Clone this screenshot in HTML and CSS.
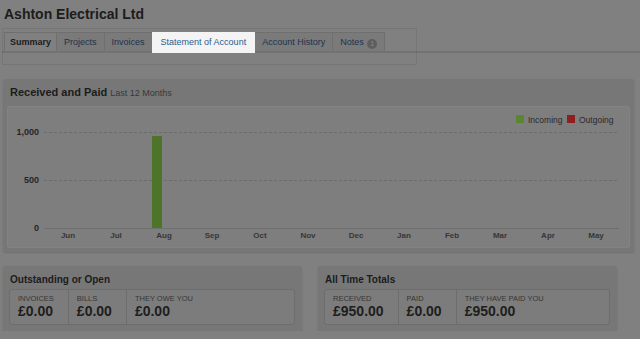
FILE: index.html
```html
<!DOCTYPE html>
<html lang="en">
<head>
    <meta charset="UTF-8">
    <title>Ashton Electrical Ltd</title>
    <link rel="stylesheet" href="styles.css">
</head>
<body>
<div class="page">

    <!--title-->
    <h1 class="title">Ashton Electrical Ltd</h1>

    <!--tabs-->
    <div class="tabs-wrap">
        <ul class="tabs">
            <li class="current">Summary</li>
            <li>Projects</li>
            <li>Invoices</li>
            <li class="spot">Statement of Account</li>
            <li>Account History</li>
            <li>Notes <span class="badge">1</span></li>
        </ul>
        <div class="spot-frame"></div>
    </div>

    <!--received and paid-->
    <div class="panel chart-panel">
        <h2>Received and Paid <small>Last 12 Months</small></h2>
        <div class="chart">
            <svg width="620" height="140" viewBox="0 0 620 140">
                <g class="legend">
                    <rect x="508" y="8" width="8" height="8" fill="#5b8631"></rect>
                    <text x="520" y="16">Incoming</text>
                    <rect x="559" y="8" width="8" height="8" fill="#8d1f1f"></rect>
                    <text x="571" y="16">Outgoing</text>
                </g>
                <g class="grid">
                    <line x1="36" y1="25.5" x2="611" y2="25.5"></line>
                    <line x1="36" y1="73.5" x2="611" y2="73.5"></line>
                </g>
                <line class="axis" x1="36" y1="121.5" x2="611" y2="121.5"></line>
                <g class="y-labels">
                    <text x="31" y="28">1,000</text>
                    <text x="31" y="76">500</text>
                    <text x="31" y="124">0</text>
                </g>
                <rect class="bar" x="144" y="29" width="10" height="92"></rect>
                <g class="x-labels">
                    <text x="60" y="131">Jun</text>
                    <text x="108" y="131">Jul</text>
                    <text x="156" y="131">Aug</text>
                    <text x="204" y="131">Sep</text>
                    <text x="252" y="131">Oct</text>
                    <text x="300" y="131">Nov</text>
                    <text x="348" y="131">Dec</text>
                    <text x="396" y="131">Jan</text>
                    <text x="444" y="131">Feb</text>
                    <text x="492" y="131">Mar</text>
                    <text x="540" y="131">Apr</text>
                    <text x="588" y="131">May</text>
                </g>
            </svg>
        </div>
    </div>

    <!--totals-->
    <div class="totals">
        <div class="panel totals-panel">
            <h2>Outstanding or Open</h2>
            <div class="figures">
                <div class="figure"><span class="label">INVOICES</span><span class="value">£0.00</span></div>
                <div class="figure"><span class="label">BILLS</span><span class="value">£0.00</span></div>
                <div class="figure wide"><span class="label">THEY OWE YOU</span><span class="value">£0.00</span></div>
            </div>
        </div>
        <div class="panel totals-panel">
            <h2>All Time Totals</h2>
            <div class="figures">
                <div class="figure"><span class="label">RECEIVED</span><span class="value">£950.00</span></div>
                <div class="figure"><span class="label">PAID</span><span class="value">£0.00</span></div>
                <div class="figure wide"><span class="label">THEY HAVE PAID YOU</span><span class="value">£950.00</span></div>
            </div>
        </div>
    </div>

</div>
</body>
</html>
```

FILE: styles.css
```css
/*reset*/
body, h1, h2, ul {
    margin: 0;
    padding: 0;
}
ul {
    list-style: none;
}
body {
    background-color: #808080;
    font-family: "Liberation Sans", Arial, sans-serif;
    color: #1e1e1e;
}
.page {
    padding-left: 2px;
}

/*title*/
.title {
    padding: 5px 2px 0;
    font-size: 14px;
    line-height: 18px;
    font-weight: bold;
    color: #1c1c1c;
}

/*tabs*/
.tabs-wrap {
    position: relative;
    margin-top: 9px;
    border-bottom: 2px solid #727272;
}
.tabs {
    display: flex;
    margin-left: 2px;
}
.tabs li {
    height: 18px;
    padding: 0 7px;
    margin-right: -1px;
    border: 1px solid #6f6f6f;
    border-bottom: none;
    background-color: #7a7a7a;
    font-size: 9px;
    line-height: 18px;
    color: #1b334d;
}
.tabs li.current {
    padding: 0 5px;
    background-color: #808080;
    font-weight: bold;
    color: #1c1c1c;
}
.tabs li.spot {
    position: relative;
    z-index: 1;
    height: 20px;
    padding: 0 8px;
    margin-bottom: -2px;
    border-color: #f4f4f4;
    background-color: #f4f4f4;
    line-height: 19px;
    color: #2a5d8f;
}
.tabs .badge {
    display: inline-block;
    width: 10px;
    height: 10px;
    margin-left: 1px;
    border-radius: 50%;
    background-color: #5e5e5e;
    font-size: 7px;
    line-height: 10px;
    text-align: center;
    vertical-align: -1px;
    color: #8a8a8a;
}
.spot-frame {
    position: absolute;
    left: 0;
    top: -4px;
    width: 413px;
    height: 35px;
    border: 1px solid rgba(0,0,0,.08);
}

/*panels*/
.panel {
    border-radius: 3px;
    background-color: #777;
    box-shadow: 0 1px 2px rgba(0,0,0,.15);
}
.panel h2 {
    font-weight: bold;
    color: #1c1c1c;
}
.chart-panel {
    margin: 26px 6px 0 1px;
    padding: 7px 4px 4px 4px;
}
.chart-panel h2 {
    margin: 0 0 6px 3px;
    font-size: 11px;
    line-height: 13px;
}
.chart-panel h2 small {
    font-size: 9px;
    font-weight: normal;
    color: #383838;
}
.chart {
    height: 140px;
    border: 1px solid #838383;
    border-radius: 2px;
    background-color: #7e7e7e;
}
.chart svg {
    display: block;
    font-family: "Liberation Sans", Arial, sans-serif;
}
.chart .legend text {
    font-size: 8.5px;
    fill: #2a2a2a;
}
.chart .grid line {
    stroke: #6b6b6b;
    stroke-width: 1;
    stroke-dasharray: 3 2;
}
.chart .axis {
    stroke: #6e6e6e;
    stroke-width: 1;
}
.chart .y-labels text {
    font-size: 9px;
    font-weight: bold;
    fill: #262626;
    text-anchor: end;
}
.chart .x-labels text {
    font-size: 8px;
    font-weight: bold;
    fill: #363636;
    text-anchor: middle;
}
.chart .bar {
    fill: #4d7429;
}

/*totals*/
.totals {
    display: flex;
    gap: 16px;
    margin: 14px 0 0 1px;
}
.totals-panel {
    width: 299px;
    box-sizing: border-box;
    padding: 8px 7px 6px 6px;
}
.totals-panel h2 {
    margin: 0 0 3px 1px;
    font-size: 10px;
    line-height: 12px;
}
.figures {
    display: flex;
    border: 1px solid #6d6d6d;
    border-radius: 3px;
    background-color: #7c7c7c;
}
.figure {
    padding: 4px 14px 5px 8px;
}
.figure + .figure {
    border-left: 1px solid #6d6d6d;
}
.figure.wide {
    flex: 1;
}
.figure .label {
    display: block;
    font-size: 7.5px;
    line-height: 9px;
    color: #363636;
}
.figure .value {
    display: block;
    font-size: 14px;
    line-height: 16px;
    font-weight: bold;
    color: #1e1e1e;
}
```
